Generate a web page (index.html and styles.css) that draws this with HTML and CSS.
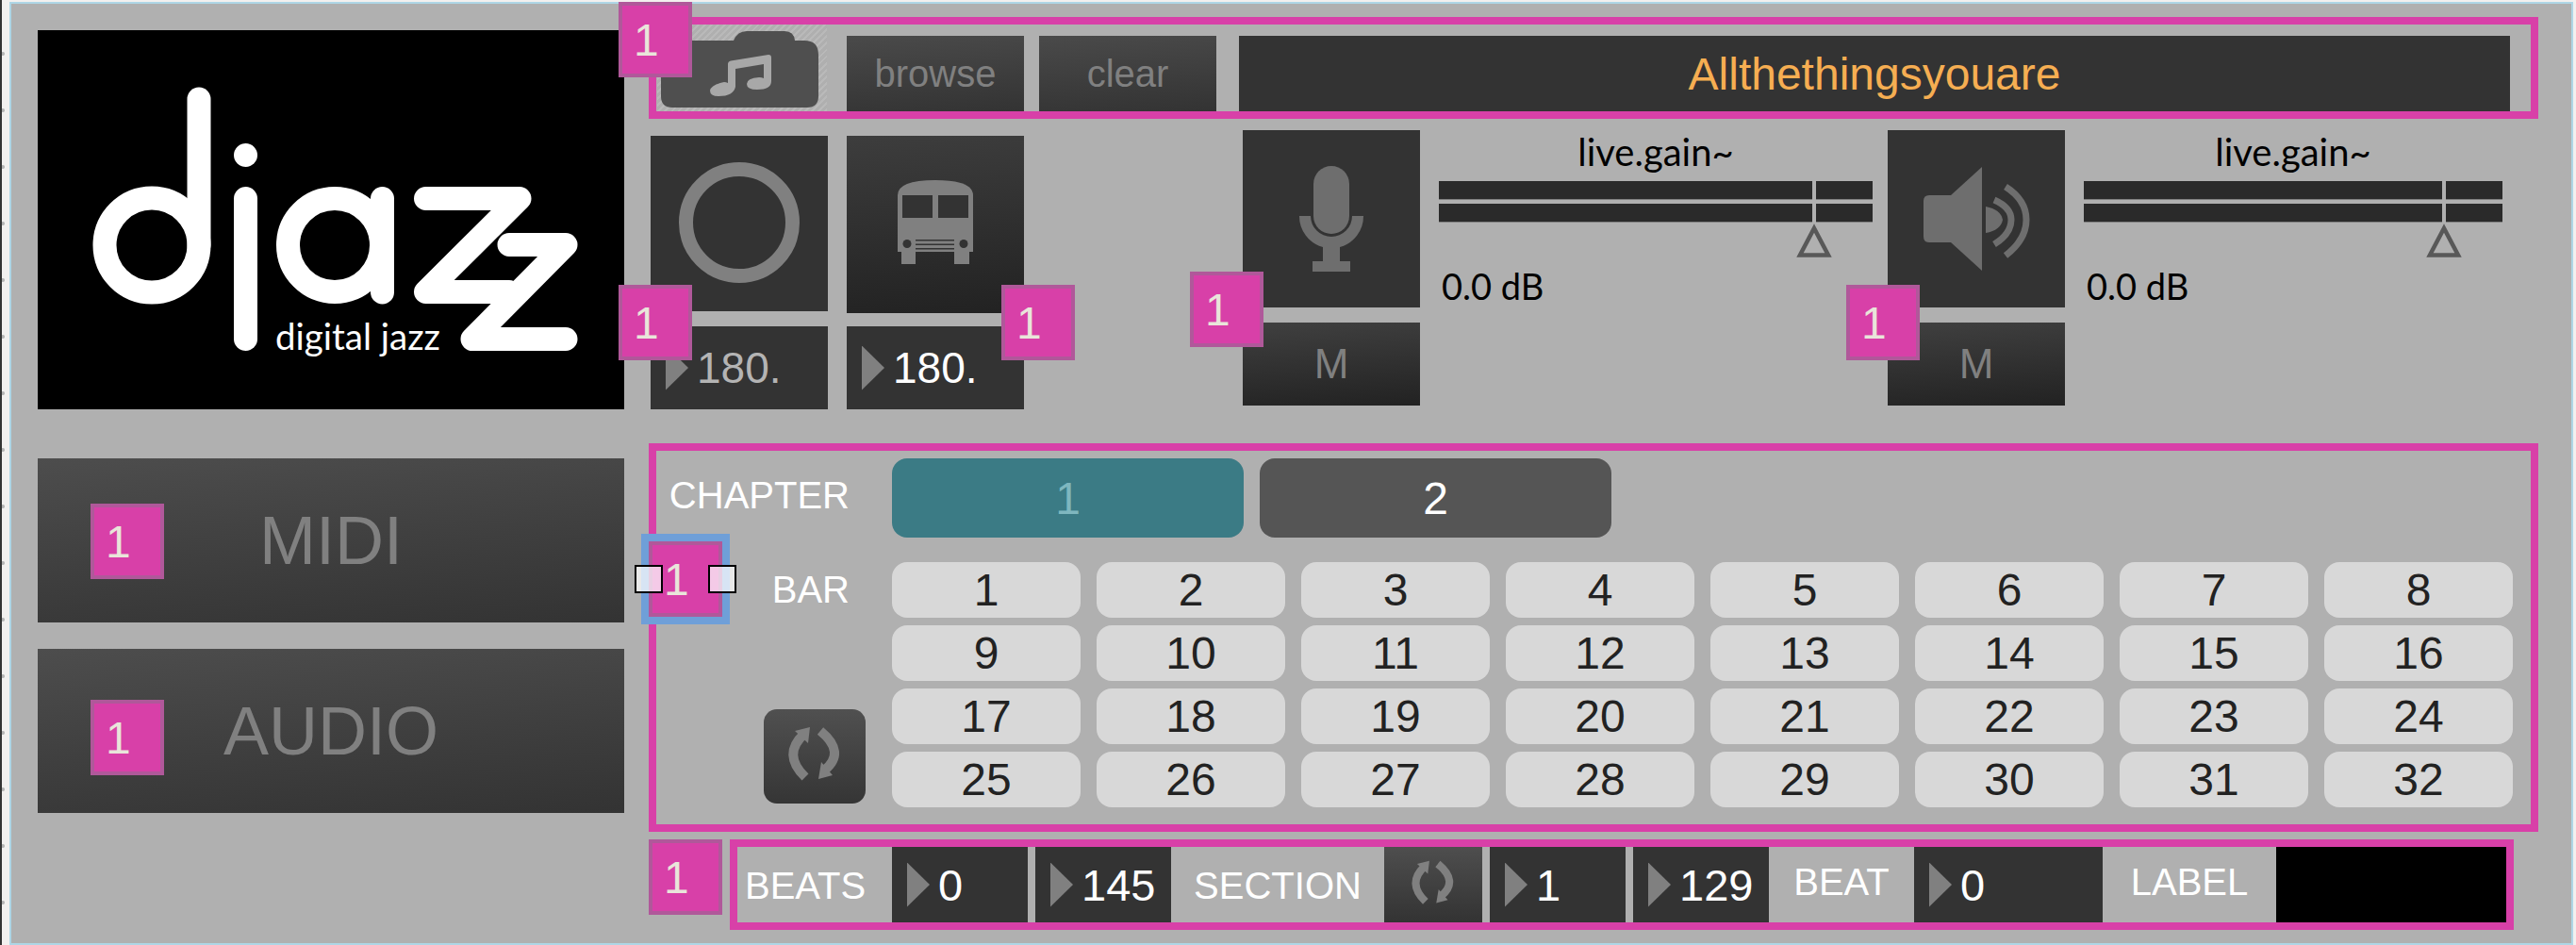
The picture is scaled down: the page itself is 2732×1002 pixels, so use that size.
FILE: index.html
```html
<!DOCTYPE html>
<html lang="en">
<head>
<meta charset="utf-8">
<title>djazz</title>
<link rel="stylesheet" href="styles.css">
</head>
<body>
<div class="window">
  <div class="panel">
    <div class="left-col">
      <div class="logo">
        <svg class="fill-svg" viewBox="40 32 622 402">
          <rect x="40" y="32" width="622" height="402" fill="#000"/>
          <g fill="none" stroke="#fff" stroke-width="25" stroke-linecap="round" stroke-linejoin="round">
            <circle cx="161" cy="260" r="50"/>
            <path d="M211 105V260"/>
            <path d="M260.5 210.5V359.5"/>
            <circle cx="355" cy="260" r="49.5"/>
            <path d="M405.5 210.5V310"/>
            <path d="M451.5 210.5H551L451.5 309.5H540"/>
            <path d="M540 259.5H600L501 359.5H600"/>
          </g>
          <circle cx="260.5" cy="164.5" r="12.5" fill="#fff"/>
          <text class="logo-text" x="292" y="371" textLength="175" lengthAdjust="spacingAndGlyphs">digital jazz</text>
        </svg>
      </div>
      <div class="big-btn big-btn-midi">MIDI<div class="badge badge-midi">1</div></div>
      <div class="big-btn big-btn-audio">AUDIO<div class="badge badge-audio">1</div></div>
    </div>

    <div class="right-col">
      <div class="frame top-frame">
        <div class="hatch">
          <svg class="fill-svg" viewBox="697 26 180 92">
            <path d="M716 43H778Q782 33 792 33H832Q842 33 843 43H853Q868 43 868 58V102Q868 114 856 114H713Q701 114 701 102V58Q701 43 716 43Z" fill="#4f4f4f"/>
            <path d="M772 68Q772 65 775 64.500L815 58Q818 58 818 61V86Q818 95 803 95Q792 95 792 89Q792 83 805 82Q808 82 810 83V68L780 73V92Q778 102 762 102Q753 102 753 96Q754 90 768 87Q770 87 772 88Z" fill="#a8a8a8"/>
          </svg>
        </div>
        <div class="tile-text">browse</div>
        <div class="tile-text">clear</div>
        <div class="title">Allthethingsyouare</div>
      </div>

      <div class="controls">
        <div class="stack stack-a">
          <div class="tile tile-rec">
            <svg class="fill-svg" viewBox="690 144 188 186">
              <circle cx="784" cy="236" r="56.5" fill="none" stroke="#808080" stroke-width="15"/>
            </svg>
          </div>
          <div class="num num-big"><span class="tri"></span><span class="val val-dim">180.</span></div>
        </div>
        <div class="stack stack-b">
          <div class="tile tile-bus">
            <svg class="fill-svg" viewBox="898 144 188 188">
              <path d="M952 267V207Q952 191 992 191Q1032 191 1032 207V267Z" fill="#808080"/>
              <rect x="956" y="262" width="15" height="18" fill="#808080"/>
              <rect x="1012" y="262" width="16" height="18" fill="#808080"/>
              <rect x="957" y="207" width="32" height="24" fill="#333"/>
              <rect x="995" y="207" width="32" height="24" fill="#333"/>
              <circle cx="962" cy="258.500" r="4.500" fill="#333"/>
              <circle cx="1022" cy="258.500" r="4.500" fill="#333"/>
              <rect x="971" y="254" width="41" height="1.500" fill="#333"/>
              <rect x="971" y="258.500" width="41" height="1.500" fill="#333"/>
              <rect x="971" y="263" width="41" height="1.500" fill="#333"/>
            </svg>
          </div>
          <div class="num num-big"><span class="tri"></span><span class="val">180.</span></div>
        </div>
        <div class="stack stack-c">
          <div class="tile tile-mic">
            <svg class="fill-svg" viewBox="1318 138 188 188">
              <g fill="#6e6e6e">
                <rect x="1393" y="176" width="38" height="72" rx="19"/>
                <path d="M1378 229H1390A22 22 0 0 0 1434 229H1446A34 34 0 0 1 1421 262V277H1432V288H1392V277H1403V262A34 34 0 0 1 1378 229Z"/>
              </g>
            </svg>
          </div>
          <div class="mute">M</div>
        </div>
        <div class="gain gain-mic">
          <div class="gain-label">live.gain~</div>
          <div class="meter">
            <div class="meter-bar"></div>
            <div class="meter-bar"></div>
            <div class="knob"></div>
          </div>
          <svg class="pointer" viewBox="0 0 38 36"><path d="M19 5L34 33.500H4Z" fill="#b0b0b0" stroke="#585858" stroke-width="4.500"/></svg>
          <div class="db">0.0 dB</div>
        </div>
        <div class="stack stack-d">
          <div class="tile tile-spk">
            <svg class="fill-svg" viewBox="2002 138 188 188">
              <path d="M2046 207H2069L2102 177V287L2069 257H2046Q2040 257 2040 251V213Q2040 207 2046 207Z" fill="#6e6e6e"/>
              <path d="M2106 219Q2122 222 2124 233Q2122 244 2106 247Z" fill="#6e6e6e"/>
              <g fill="none" stroke="#6e6e6e" stroke-width="7">
                <path d="M2115 212Q2133 220 2133 233Q2133 248 2115 259"/>
                <path d="M2127 198Q2149 212 2149 233Q2149 254 2127 271"/>
              </g>
            </svg>
          </div>
          <div class="mute">M</div>
        </div>
        <div class="gain gain-out">
          <div class="gain-label">live.gain~</div>
          <div class="meter">
            <div class="meter-bar"></div>
            <div class="meter-bar"></div>
            <div class="knob"></div>
          </div>
          <svg class="pointer" viewBox="0 0 38 36"><path d="M19 5L34 33.500H4Z" fill="#b0b0b0" stroke="#585858" stroke-width="4.500"/></svg>
          <div class="db">0.0 dB</div>
        </div>
      </div>

      <div class="frame chapter-frame">
        <div class="chapter-row">
          <div class="side-label">CHAPTER</div>
          <div class="chapter-btns">
            <div class="chapter chapter-on">1</div>
            <div class="chapter chapter-off">2</div>
          </div>
        </div>
        <div class="bars-row">
          <div class="bars-side">
            <div class="side-label bar-label">BAR</div>
            <div class="loop-btn">
              <svg class="loop-icon" viewBox="0 0 108 100">
                <g fill="none" stroke="#808080" stroke-width="10">
                  <path d="M44 72Q19 48 43 26"/>
                  <path d="M60 23Q88 46 64 65"/>
                </g>
                <path d="M33 23L49 19L47 36Z" fill="#808080"/>
                <path d="M58 74L73 70L61 56Z" fill="#808080"/>
              </svg>
            </div>
          </div>
          <div class="bar-grid">
            <div class="bar">1</div><div class="bar">2</div><div class="bar">3</div><div class="bar">4</div>
            <div class="bar">5</div><div class="bar">6</div><div class="bar">7</div><div class="bar">8</div>
            <div class="bar">9</div><div class="bar">10</div><div class="bar">11</div><div class="bar">12</div>
            <div class="bar">13</div><div class="bar">14</div><div class="bar">15</div><div class="bar">16</div>
            <div class="bar">17</div><div class="bar">18</div><div class="bar">19</div><div class="bar">20</div>
            <div class="bar">21</div><div class="bar">22</div><div class="bar">23</div><div class="bar">24</div>
            <div class="bar">25</div><div class="bar">26</div><div class="bar">27</div><div class="bar">28</div>
            <div class="bar">29</div><div class="bar">30</div><div class="bar">31</div><div class="bar">32</div>
          </div>
        </div>
      </div>

      <div class="bottom-row">
        <div class="badge badge-flow">1</div>
        <div class="frame bottom-frame">
          <div class="cell-label cl-beats">BEATS</div>
          <div class="num w144"><span class="tri"></span><span class="val">0</span></div>
          <div class="num w144 gap-l"><span class="tri"></span><span class="val">145</span></div>
          <div class="cell-label cl-section">SECTION</div>
          <div class="loop-cell">
            <svg class="loop-icon-sm" viewBox="0 0 108 100">
              <g fill="none" stroke="#808080" stroke-width="10">
                <path d="M44 72Q19 48 43 26"/>
                <path d="M60 23Q88 46 64 65"/>
              </g>
              <path d="M33 23L49 19L47 36Z" fill="#808080"/>
              <path d="M58 74L73 70L61 56Z" fill="#808080"/>
            </svg>
          </div>
          <div class="num w144 gap-l"><span class="tri"></span><span class="val">1</span></div>
          <div class="num w144 gap-l"><span class="tri"></span><span class="val">129</span></div>
          <div class="cell-label cl-beat">BEAT</div>
          <div class="num w200"><span class="tri"></span><span class="val">0</span></div>
          <div class="cell-label cl-label">LABEL</div>
          <div class="black-cell"></div>
        </div>
      </div>
    </div>
  </div>

  <div class="badge badge-top">1</div>
  <div class="badge badge-rec">1</div>
  <div class="badge badge-bus">1</div>
  <div class="badge badge-mic">1</div>
  <div class="badge badge-spk">1</div>
  <div class="selection">
    <div class="badge badge-sel">1</div>
    <div class="handle handle-l"></div>
    <div class="handle handle-r"></div>
  </div>
</div>
</body>
</html>
```

FILE: styles.css
```css
* { box-sizing: border-box; }
html, body { margin: 0; padding: 0; }
body { font-family: "Liberation Sans", Arial, sans-serif; background: #f2f0ef; }

.window {
  position: relative;
  width: 2732px;
  height: 1002px;
  overflow: hidden;
  padding: 2px 3px 0 10px;
  background:
    linear-gradient(#333, #333) 0 0 / 2px 100% no-repeat,
    radial-gradient(circle at 3px 4px, #b4b4b4 0 1.5px, transparent 2.5px) 0 53px / 8px 60px repeat-y,
    #f2f0ef;
}
.panel {
  display: flex;
  gap: 26px;
  height: 1000px;
  padding: 14px 0 0 28px;
  border: 2px solid #aed6e6;
  background: #b0b0b0;
}

.fill-svg { display: block; width: 100%; height: 100%; }

/* Left column */
.left-col { width: 622px; margin-top: 14px; display: flex; flex-direction: column; }
.logo { height: 402px; background: #000; }
.logo-text { font-family: "Lato", "Open Sans", sans-serif; font-weight: 400; font-size: 38px; fill: #fff; }
.big-btn {
  position: relative;
  height: 174px;
  display: flex;
  align-items: center;
  justify-content: center;
  font-size: 72px;
  color: #808080;
  background: linear-gradient(175deg, #4d4d4d, #333);
}
.big-btn-midi { margin-top: 52px; }
.big-btn-audio { margin-top: 28px; }

/* Right column */
.right-col { width: 2004px; display: flex; flex-direction: column; }
.frame { border: 8px solid #d840a8; }

.top-frame {
  height: 108px;
  display: flex;
  align-items: flex-end;
  padding: 0 22px 0 1px;
}
.hatch {
  width: 180px;
  height: 92px;
  margin-right: 21px;
  background: repeating-linear-gradient(135deg, #b9b9b9 0 2px, #afafaf 2px 5px);
}
.tile-text {
  width: 188px;
  height: 80px;
  margin-right: 16px;
  display: flex;
  align-items: center;
  justify-content: center;
  font-size: 40px;
  color: #808080;
  background: linear-gradient(176deg, #4a4a4a, #333);
}
.tile-text + .title { margin-left: 8px; }
.title {
  flex: 1;
  height: 80px;
  display: flex;
  align-items: center;
  justify-content: center;
  font-size: 48px;
  color: #f6ae52;
  background: #333;
}

.controls { display: flex; height: 296px; margin-top: 12px; }
.stack { width: 188px; display: flex; flex-direction: column; }
.stack-a { margin: 6px 0 0 2px; }
.stack-b { margin: 6px 0 0 20px; }
.stack-c { margin-left: 232px; }
.stack-d { margin-left: 16px; }
.tile-rec { height: 186px; background: #333; }
.tile-bus { height: 188px; background: linear-gradient(176deg, #3d3d3d, #222); }
.tile-mic, .tile-spk { height: 188px; background: #333; }

.num {
  display: flex;
  align-items: center;
  height: 80px;
  padding-left: 16px;
  font-size: 47px;
  color: #fff;
  background: #333;
}
.num-big { height: 88px; margin-top: auto; font-size: 46px; }
.tri {
  flex: none;
  width: 24px;
  height: 47px;
  margin-right: 9px;
  background: #808080;
  clip-path: polygon(0 0, 100% 50%, 0 100%);
}
.val { line-height: 1; }
.val-dim { color: #b4b4b4; }

.mute {
  height: 88px;
  margin-top: 16px;
  display: flex;
  align-items: center;
  justify-content: center;
  font-size: 44px;
  color: #808080;
  background: linear-gradient(176deg, #404040, #222);
}

.gain { margin-left: 20px; display: flex; flex-direction: column; }
.gain-mic { width: 460px; }
.gain-out { width: 444px; }
.gain-label {
  height: 54px;
  line-height: 46px;
  text-align: center;
  font-family: "Lato", "Open Sans", sans-serif;
  font-size: 40px;
  color: #000;
}
.meter { position: relative; display: flex; flex-direction: column; gap: 5px; }
.meter-bar { height: 19px; background: #2a2a2a; box-shadow: 0 1px 0 #808080; }
.knob { position: absolute; top: 0; bottom: -2px; width: 4px; background: #b0b0b0; }
.gain-mic .knob { left: 396px; }
.gain-out .knob { left: 380px; }
.pointer { display: block; width: 38px; height: 36px; margin-top: 2px; }
.gain-mic .pointer { margin-left: 379px; }
.gain-out .pointer { margin-left: 363px; }
.db {
  margin-top: 10px;
  padding-left: 3px;
  line-height: 40px;
  font-family: "Lato", "Open Sans", sans-serif;
  font-size: 38px;
  color: #000;
}

/* Chapter frame */
.chapter-frame { height: 412px; margin-top: 36px; padding-top: 8px; }
.chapter-row { display: grid; grid-template-columns: 250px 1fr; height: 84px; }
.side-label { width: 205px; font-size: 40px; color: #fff; text-align: right; line-height: 84px; white-space: nowrap; }
.chapter-row .side-label { line-height: 78px; }
.chapter-btns { display: flex; gap: 17px; }
.chapter {
  width: 373px;
  display: flex;
  align-items: center;
  justify-content: center;
  border-radius: 16px;
  font-size: 48px;
}
.chapter-on { background: #3b7b85; color: #7fb7bf; }
.chapter-off { background: #555; color: #fff; }

.bars-row { display: grid; grid-template-columns: 250px 1fr; margin-top: 26px; }
.bars-side { display: flex; flex-direction: column; }
.bar-label { line-height: 59px; }
.loop-btn {
  width: 108px;
  height: 100px;
  margin: auto 0 4px 114px;
  border-radius: 14px;
  background: linear-gradient(#505050, #353535);
}
.loop-icon { display: block; width: 108px; height: 100px; }
.bar-grid {
  width: 1719px;
  display: grid;
  grid-template-columns: repeat(8, 1fr);
  grid-auto-rows: 59px;
  column-gap: 17px;
  row-gap: 8px;
}
.bar {
  display: flex;
  align-items: center;
  justify-content: center;
  border-radius: 16px;
  font-size: 48px;
  color: #222;
  background: #d8d8d8;
}

/* Bottom row */
.bottom-row { display: flex; gap: 8px; margin-top: 8px; }
.bottom-frame { width: 1892px; height: 96px; display: flex; }
.cell-label { font-size: 40px; color: #fff; display: flex; justify-content: center; white-space: nowrap; }
.cl-beats { width: 164px; line-height: 82px; justify-content: flex-start; padding-left: 8px; }
.cl-section { width: 226px; line-height: 82px; }
.cl-beat { width: 154px; line-height: 74px; }
.cl-label { width: 184px; line-height: 74px; }
.w144 { width: 144px; }
.w200 { width: 200px; }
.gap-l { margin-left: 8px; }
.loop-cell {
  width: 104px;
  display: flex;
  align-items: center;
  justify-content: center;
  background: linear-gradient(#4e4e4e, #333);
}
.loop-icon-sm { display: block; width: 88px; height: 82px; }
.black-cell { width: 244px; background: #000; }

/* Overlaid badges */
.badge {
  width: 78px;
  height: 80px;
  padding-left: 12px;
  display: flex;
  align-items: center;
  border: 4px solid #b0589a;
  background: #d840a8;
  color: #e9e5da;
  font-size: 48px;
}
.badge-top, .badge-rec, .badge-bus, .badge-mic, .badge-spk, .badge-midi, .badge-audio { position: absolute; }
.badge-top { left: 656px; top: 2px; }
.badge-rec { left: 656px; top: 302px; }
.badge-bus { left: 1062px; top: 302px; }
.badge-mic { left: 1262px; top: 288px; }
.badge-spk { left: 1958px; top: 302px; }
.badge-midi { left: 56px; top: 48px; }
.badge-audio { left: 56px; top: 54px; }
.badge-flow { flex: none; }

.selection {
  position: absolute;
  left: 680px;
  top: 566px;
  width: 94px;
  height: 96px;
  border: 8px solid #6f9fd8;
}
.handle {
  position: absolute;
  top: 25px;
  width: 30px;
  height: 30px;
  border: 2px solid #000;
  background: rgba(255, 255, 255, 0.72);
}
.handle-l { left: -15px; }
.handle-r { left: 63px; }
```
